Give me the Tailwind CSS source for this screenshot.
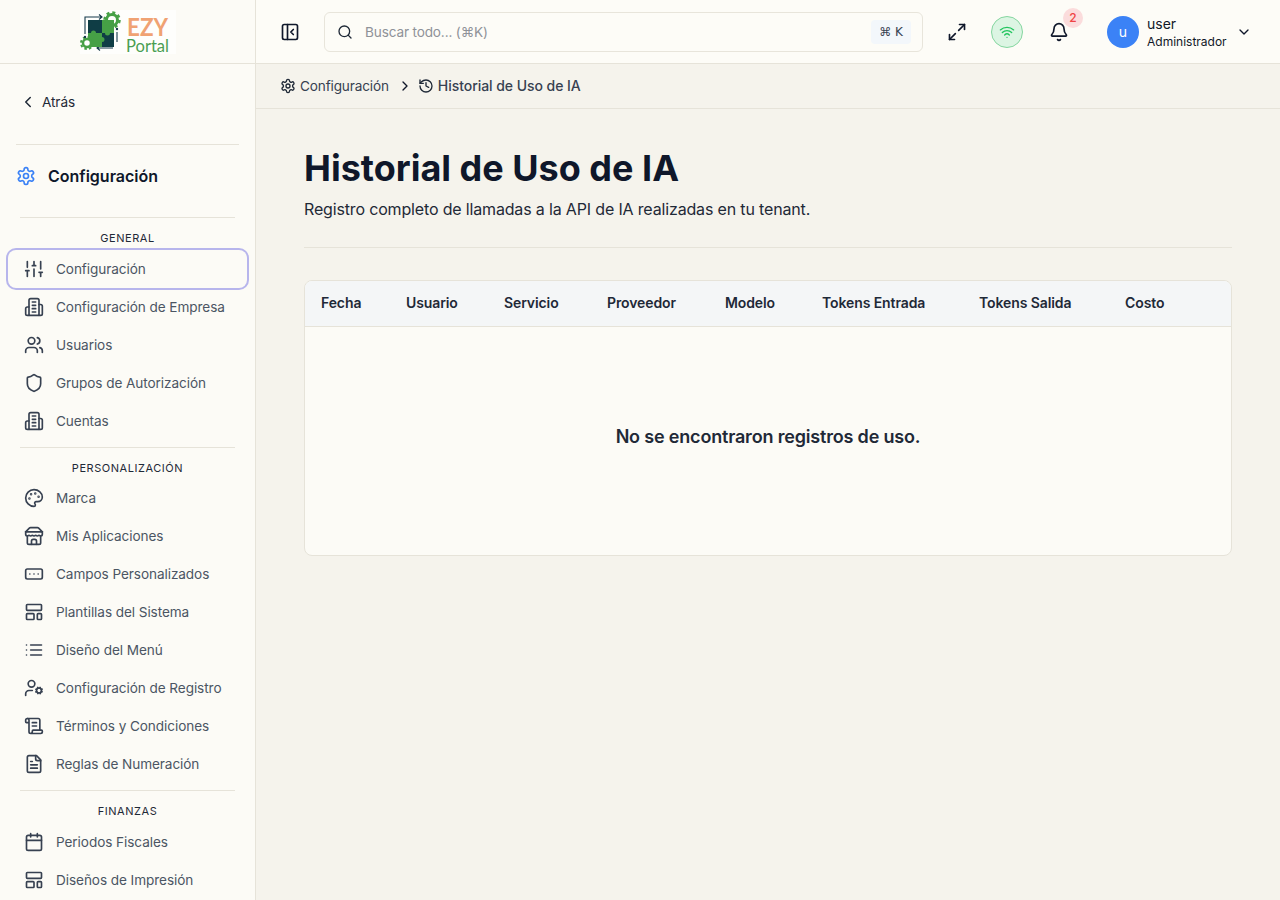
<!DOCTYPE html>
<html>
<head>
  <meta charset="UTF-8">
  <title>Historial de Uso de IA</title>
  <script src="https://cdn.jsdelivr.net/npm/@tailwindcss/browser@4"></script>
</head>
<body class="h-[900px] overflow-hidden bg-[#f5f3ec] font-['Inter',sans-serif] text-[#0f172a]">
  <!-- Icon sprite -->
  <svg class="hidden">
    <symbol id="i-sliders" viewBox="0 0 24 24"><path d="M4 21v-7M4 10V3M12 21v-9M12 8V3M20 21v-5M20 12V3M2 14h4M10 8h4M18 16h4"/></symbol>
    <symbol id="i-building" viewBox="0 0 24 24"><path d="M6 22V4a2 2 0 0 1 2-2h8a2 2 0 0 1 2 2v18Z"/><path d="M6 12H4a2 2 0 0 0-2 2v6a2 2 0 0 0 2 2h2"/><path d="M18 9h2a2 2 0 0 1 2 2v9a2 2 0 0 1-2 2h-2"/><path d="M10 6h4M10 10h4M10 14h4M10 18h4"/></symbol>
    <symbol id="i-users" viewBox="0 0 24 24"><path d="M16 21v-2a4 4 0 0 0-4-4H6a4 4 0 0 0-4 4v2"/><circle cx="9" cy="7" r="4"/><path d="M22 21v-2a4 4 0 0 0-3-3.87"/><path d="M16 3.13a4 4 0 0 1 0 7.75"/></symbol>
    <symbol id="i-shield" viewBox="0 0 24 24"><path d="M20 13c0 5-3.5 7.5-7.66 8.95a1 1 0 0 1-.67-.01C7.5 20.5 4 18 4 13V6a1 1 0 0 1 1-1c2 0 4.5-1.2 6.24-2.72a1.17 1.17 0 0 1 1.52 0C14.51 3.81 17 5 19 5a1 1 0 0 1 1 1z"/></symbol>
    <symbol id="i-palette" viewBox="0 0 24 24"><circle cx="13.5" cy="6.5" r=".5" fill="currentColor"/><circle cx="17.5" cy="10.5" r=".5" fill="currentColor"/><circle cx="8.5" cy="7.5" r=".5" fill="currentColor"/><circle cx="6.5" cy="12.5" r=".5" fill="currentColor"/><path d="M12 2C6.5 2 2 6.5 2 12s4.5 10 10 10c.926 0 1.648-.746 1.648-1.688 0-.437-.18-.835-.437-1.125-.29-.289-.438-.652-.438-1.125a1.64 1.64 0 0 1 1.668-1.668h1.996c3.051 0 5.555-2.503 5.555-5.554C21.965 6.012 17.461 2 12 2z"/></symbol>
    <symbol id="i-store" viewBox="0 0 24 24"><path d="m2 7 4.41-4.41A2 2 0 0 1 7.83 2h8.34a2 2 0 0 1 1.42.59L22 7"/><path d="M4 12v8a2 2 0 0 0 2 2h12a2 2 0 0 0 2-2v-8"/><path d="M15 22v-4a2 2 0 0 0-2-2h-2a2 2 0 0 0-2 2v4"/><path d="M2 7h20"/><path d="M22 7v3a2 2 0 0 1-2 2a2.7 2.7 0 0 1-1.59-.63.7.7 0 0 0-.82 0A2.7 2.7 0 0 1 16 12a2.7 2.7 0 0 1-1.59-.63.7.7 0 0 0-.82 0A2.7 2.7 0 0 1 12 12a2.7 2.7 0 0 1-1.59-.63.7.7 0 0 0-.82 0A2.7 2.7 0 0 1 8 12a2.7 2.7 0 0 1-1.59-.63.7.7 0 0 0-.82 0A2.7 2.7 0 0 1 4 12a2 2 0 0 1-2-2V7"/></symbol>
    <symbol id="i-fields" viewBox="0 0 24 24"><rect width="20" height="12" x="2" y="6" rx="2"/><path d="M12 12h.01M17 12h.01M7 12h.01"/></symbol>
    <symbol id="i-layout" viewBox="0 0 24 24"><rect width="18" height="7" x="3" y="3" rx="1"/><rect width="9" height="7" x="3" y="14" rx="1"/><rect width="5" height="7" x="16" y="14" rx="1"/></symbol>
    <symbol id="i-list" viewBox="0 0 24 24"><path d="M3 12h.01M3 18h.01M3 6h.01M8 12h13M8 18h13M8 6h13"/></symbol>
    <symbol id="i-usercog" viewBox="0 0 24 24"><circle cx="18" cy="15" r="3"/><circle cx="9" cy="7" r="4"/><path d="M10 15H6a4 4 0 0 0-4 4v2"/><path d="m21.7 16.4-.9-.3M15.2 13.9l-.9-.3M16.6 18.7l.3-.9M19.1 12.2l.3-.9M19.6 18.7l-.4-1M16.8 12.3l-.4-1M14.3 16.6l1-.4M20.7 13.8l1-.4"/></symbol>
    <symbol id="i-scroll" viewBox="0 0 24 24"><path d="M15 12h-5M15 8h-5"/><path d="M19 17V5a2 2 0 0 0-2-2H4"/><path d="M8 21h12a2 2 0 0 0 2-2v-1a1 1 0 0 0-1-1H11a1 1 0 0 0-1 1v1a2 2 0 1 1-4 0V5a2 2 0 1 0-4 0v2a1 1 0 0 0 1 1h3"/></symbol>
    <symbol id="i-file" viewBox="0 0 24 24"><path d="M15 2H6a2 2 0 0 0-2 2v16a2 2 0 0 0 2 2h12a2 2 0 0 0 2-2V7Z"/><path d="M14 2v4a2 2 0 0 0 2 2h4"/><path d="M10 9H8M16 13H8M16 17H8"/></symbol>
    <symbol id="i-calendar" viewBox="0 0 24 24"><path d="M8 2v4M16 2v4"/><rect width="18" height="18" x="3" y="4" rx="2"/><path d="M3 10h18"/></symbol>
    <symbol id="i-gear" viewBox="0 0 24 24"><path d="M12.22 2h-.44a2 2 0 0 0-2 2v.18a2 2 0 0 1-1 1.73l-.43.25a2 2 0 0 1-2 0l-.15-.08a2 2 0 0 0-2.73.73l-.22.38a2 2 0 0 0 .73 2.73l.15.1a2 2 0 0 1 1 1.72v.51a2 2 0 0 1-1 1.74l-.15.09a2 2 0 0 0-.73 2.73l.22.38a2 2 0 0 0 2.73.73l.15-.08a2 2 0 0 1 2 0l.43.25a2 2 0 0 1 1 1.73V20a2 2 0 0 0 2 2h.44a2 2 0 0 0 2-2v-.18a2 2 0 0 1 1-1.73l.43-.25a2 2 0 0 1 2 0l.15.08a2 2 0 0 0 2.73-.73l.22-.39a2 2 0 0 0-.73-2.73l-.15-.08a2 2 0 0 1-1-1.74v-.5a2 2 0 0 1 1-1.74l.15-.09a2 2 0 0 0 .73-2.73l-.22-.38a2 2 0 0 0-2.73-.73l-.15.08a2 2 0 0 1-2 0l-.43-.25a2 2 0 0 1-1-1.73V4a2 2 0 0 0-2-2z"/><circle cx="12" cy="12" r="3"/></symbol>
  </svg>

  <div class="flex h-[900px]">
    <!-- Sidebar -->
    <aside class="w-[256px] h-[900px] shrink-0 overflow-hidden border-r border-[#e6e3d9] bg-[#fcfbf6]">
      <div class="h-[64px] flex items-center justify-center border-b border-[#e6e3d9]">
        <svg width="96" height="44" viewBox="0 0 96 44" class="bg-white/70">
          <path d="M5 24V7h17M19 4.500 22 7l-3 2.500M37 22v10M17 38h16M20 35.500 17 38l3 2.500" fill="none" stroke="#15394a" stroke-width="1.1"/>
          <rect x="8" y="10" width="14" height="13" fill="#0f3d45"/>
          <rect x="22" y="23" width="12" height="14" fill="#0f3d45"/>
          <path d="M22 10h12v13h-4a2.500 2.500 0 0 1-5 0h-3z" fill="#46a046"/>
          <path d="M8 23h3a2.500 2.500 0 0 1 5 0h6v4a2.500 2.500 0 0 1 0 5v5H8z" fill="#46a046"/>
          <circle cx="32" cy="10" r="7.500" fill="none" stroke="#46a046" stroke-width="2.500" stroke-dasharray="3 2.900"/>
          <circle cx="32" cy="10" r="5.500" fill="none" stroke="#46a046" stroke-width="3"/>
          <circle cx="7" cy="33" r="6" fill="none" stroke="#46a046" stroke-width="2" stroke-dasharray="2.500 2.200"/>
          <circle cx="7" cy="33" r="4" fill="#fff" stroke="#46a046" stroke-width="2.500"/>
          <circle cx="37" cy="19" r="1.200" fill="#15394a"/>
          <circle cx="5" cy="27" r="1.200" fill="#15394a"/>
          <text x="47" y="26" font-family="Lato, sans-serif" font-size="24" font-weight="700" fill="#f0a273" textLength="41" lengthAdjust="spacingAndGlyphs">EZY</text>
          <text x="46" y="42" font-family="Lato, sans-serif" font-size="17" fill="#4a9e52" textLength="43" lengthAdjust="spacingAndGlyphs">Portal</text>
        </svg>
      </div>

      <div class="h-[80px] flex items-center pl-[19px] pb-[4px] gap-[5px] text-[#1f2937]">
        <svg class="w-[18px] h-[18px]" viewBox="0 0 24 24" fill="none" stroke="currentColor" stroke-width="2" stroke-linecap="round" stroke-linejoin="round"><path d="m15 18-6-6 6-6"/></svg>
        <span class="text-[13.6px] leading-[20px] tracking-[-0.1px]">Atrás</span>
      </div>

      <div class="mx-[16px] border-t border-[#e6e3d9]"></div>
      <div class="h-[72px] flex items-center pl-[16px] pb-[10px] gap-[12px]">
        <svg class="w-[20px] h-[20px] text-[#3b82f6]" fill="none" stroke="currentColor" stroke-width="2" stroke-linecap="round" stroke-linejoin="round"><use href="#i-gear"/></svg>
        <span class="text-[16px] font-semibold">Configuración</span>
      </div>

      <div class="mx-[20px] border-t border-[#e6e3d9]"></div>
      <div class="h-[32px] pt-[13px] text-center text-[11px] leading-[14px] tracking-[0.05em] text-[#1f2937]">GENERAL</div>
      <nav class="text-[13.6px] leading-[20px] tracking-[-0.08px] text-[#4b5563]">
        <a class="mx-[8px] flex h-[38px] items-center gap-[12px] rounded-lg pl-[16px] ring-2 ring-[#b7b5ec]">
          <svg class="w-[20px] h-[20px] text-[#374151]" fill="none" stroke="currentColor" stroke-width="2" stroke-linecap="round" stroke-linejoin="round"><use href="#i-sliders"/></svg>Configuración</a>
        <a class="mx-[8px] flex h-[38px] items-center gap-[12px] pl-[16px]">
          <svg class="w-[20px] h-[20px] text-[#374151]" fill="none" stroke="currentColor" stroke-width="2" stroke-linecap="round" stroke-linejoin="round"><use href="#i-building"/></svg>Configuración de Empresa</a>
        <a class="mx-[8px] flex h-[38px] items-center gap-[12px] pl-[16px]">
          <svg class="w-[20px] h-[20px] text-[#374151]" fill="none" stroke="currentColor" stroke-width="2" stroke-linecap="round" stroke-linejoin="round"><use href="#i-users"/></svg>Usuarios</a>
        <a class="mx-[8px] flex h-[38px] items-center gap-[12px] pl-[16px]">
          <svg class="w-[20px] h-[20px] text-[#374151]" fill="none" stroke="currentColor" stroke-width="2" stroke-linecap="round" stroke-linejoin="round"><use href="#i-shield"/></svg>Grupos de Autorización</a>
        <a class="mx-[8px] flex h-[38px] items-center gap-[12px] pl-[16px]">
          <svg class="w-[20px] h-[20px] text-[#374151]" fill="none" stroke="currentColor" stroke-width="2" stroke-linecap="round" stroke-linejoin="round"><use href="#i-building"/></svg>Cuentas</a>
      </nav>

      <div class="mx-[20px] mt-[7px] border-t border-[#e6e3d9]"></div>
      <div class="h-[31px] pt-[13px] text-center text-[11px] leading-[14px] tracking-[0.05em] text-[#1f2937]">PERSONALIZACIÓN</div>
      <nav class="text-[13.6px] leading-[20px] tracking-[-0.08px] text-[#4b5563]">
        <a class="mx-[8px] flex h-[38px] items-center gap-[12px] pl-[16px]">
          <svg class="w-[20px] h-[20px] text-[#374151]" fill="none" stroke="currentColor" stroke-width="2" stroke-linecap="round" stroke-linejoin="round"><use href="#i-palette"/></svg>Marca</a>
        <a class="mx-[8px] flex h-[38px] items-center gap-[12px] pl-[16px]">
          <svg class="w-[20px] h-[20px] text-[#374151]" fill="none" stroke="currentColor" stroke-width="2" stroke-linecap="round" stroke-linejoin="round"><use href="#i-store"/></svg>Mis Aplicaciones</a>
        <a class="mx-[8px] flex h-[38px] items-center gap-[12px] pl-[16px]">
          <svg class="w-[20px] h-[20px] text-[#374151]" fill="none" stroke="currentColor" stroke-width="2" stroke-linecap="round" stroke-linejoin="round"><use href="#i-fields"/></svg>Campos Personalizados</a>
        <a class="mx-[8px] flex h-[38px] items-center gap-[12px] pl-[16px]">
          <svg class="w-[20px] h-[20px] text-[#374151]" fill="none" stroke="currentColor" stroke-width="2" stroke-linecap="round" stroke-linejoin="round"><use href="#i-layout"/></svg>Plantillas del Sistema</a>
        <a class="mx-[8px] flex h-[38px] items-center gap-[12px] pl-[16px]">
          <svg class="w-[20px] h-[20px] text-[#374151]" fill="none" stroke="currentColor" stroke-width="2" stroke-linecap="round" stroke-linejoin="round"><use href="#i-list"/></svg>Diseño del Menú</a>
        <a class="mx-[8px] flex h-[38px] items-center gap-[12px] pl-[16px]">
          <svg class="w-[20px] h-[20px] text-[#374151]" fill="none" stroke="currentColor" stroke-width="2" stroke-linecap="round" stroke-linejoin="round"><use href="#i-usercog"/></svg>Configuración de Registro</a>
        <a class="mx-[8px] flex h-[38px] items-center gap-[12px] pl-[16px]">
          <svg class="w-[20px] h-[20px] text-[#374151]" fill="none" stroke="currentColor" stroke-width="2" stroke-linecap="round" stroke-linejoin="round"><use href="#i-scroll"/></svg>Términos y Condiciones</a>
        <a class="mx-[8px] flex h-[38px] items-center gap-[12px] pl-[16px]">
          <svg class="w-[20px] h-[20px] text-[#374151]" fill="none" stroke="currentColor" stroke-width="2" stroke-linecap="round" stroke-linejoin="round"><use href="#i-file"/></svg>Reglas de Numeración</a>
      </nav>

      <div class="mx-[20px] mt-[7px] border-t border-[#e6e3d9]"></div>
      <div class="h-[32px] pt-[13px] text-center text-[11px] leading-[14px] tracking-[0.05em] text-[#1f2937]">FINANZAS</div>
      <nav class="text-[13.6px] leading-[20px] tracking-[-0.08px] text-[#4b5563]">
        <a class="mx-[8px] flex h-[38px] items-center gap-[12px] pl-[16px]">
          <svg class="w-[20px] h-[20px] text-[#374151]" fill="none" stroke="currentColor" stroke-width="2" stroke-linecap="round" stroke-linejoin="round"><use href="#i-calendar"/></svg>Periodos Fiscales</a>
        <a class="mx-[8px] flex h-[38px] items-center gap-[12px] pl-[16px]">
          <svg class="w-[20px] h-[20px] text-[#374151]" fill="none" stroke="currentColor" stroke-width="2" stroke-linecap="round" stroke-linejoin="round"><use href="#i-layout"/></svg>Diseños de Impresión</a>
      </nav>
    </aside>

    <div class="flex-1 min-w-0">
      <!-- Top bar -->
      <header class="h-[64px] flex items-center border-b border-[#e6e3d9] bg-[#fdfcf7] pl-[24px]">
        <svg class="w-[20px] h-[20px] shrink-0" viewBox="0 0 24 24" fill="none" stroke="currentColor" stroke-width="2" stroke-linecap="round" stroke-linejoin="round"><rect width="18" height="18" x="3" y="3" rx="2"/><path d="M9 3v18"/><path d="m16 15-3-3 3-3"/></svg>
        <div class="ml-[24px] w-[599px] h-[40px] flex items-center rounded-md border border-[#e8e5db] pl-[12px] pr-[11px]">
          <svg class="w-[16px] h-[16px] text-[#1f2937]" viewBox="0 0 24 24" fill="none" stroke="currentColor" stroke-width="2" stroke-linecap="round" stroke-linejoin="round"><circle cx="11" cy="11" r="8"/><path d="m21 21-4.3-4.3"/></svg>
          <span class="ml-[12px] text-[13.6px] leading-[20px] tracking-[-0.15px] text-[#8f9298]">Buscar todo... (⌘K)</span>
          <span class="ml-auto h-[24px] w-[40px] flex items-center justify-center rounded bg-[#f3f7fb] text-[12px] text-[#374151] font-['DejaVu_Sans',sans-serif]">⌘ K</span>
        </div>
        <svg class="ml-[24px] w-[20px] h-[20px]" viewBox="0 0 24 24" fill="none" stroke="currentColor" stroke-width="2" stroke-linecap="round" stroke-linejoin="round"><path d="M15 3h6v6"/><path d="m21 3-7 7"/><path d="m3 21 7-7"/><path d="M9 21H3v-6"/></svg>
        <div class="ml-[24px] w-[32px] h-[32px] flex items-center justify-center rounded-full border border-[#86d6a0] bg-[#dcf5e3]">
          <svg class="w-[16px] h-[16px] text-[#22c55e]" viewBox="0 0 24 24" fill="none" stroke="currentColor" stroke-width="2" stroke-linecap="round" stroke-linejoin="round"><path d="M12 20h.01"/><path d="M2 8.82a15 15 0 0 1 20 0"/><path d="M5 12.859a10 10 0 0 1 14 0"/><path d="M8.5 16.429a5 5 0 0 1 7 0"/></svg>
        </div>
        <div class="relative ml-[26px] w-[20px] h-[20px]">
          <svg class="w-[20px] h-[20px]" viewBox="0 0 24 24" fill="none" stroke="currentColor" stroke-width="2" stroke-linecap="round" stroke-linejoin="round"><path d="M10.268 21a2 2 0 0 0 3.464 0"/><path d="M3.262 15.326A1 1 0 0 0 4 17h16a1 1 0 0 0 .74-1.673C19.41 13.956 18 12.499 18 8A6 6 0 0 0 6 8c0 4.499-1.411 5.956-2.738 7.326"/></svg>
          <span class="absolute left-[14px] top-[-14px] w-[20px] h-[20px] flex items-center justify-center rounded-full bg-[#fbdcdc] text-[12px] font-medium text-[#ef4444]">2</span>
        </div>
        <div class="ml-[38px] w-[32px] h-[32px] flex items-center justify-center rounded-full bg-[#3b82f6] text-[14px] text-white">u</div>
        <div class="ml-[8px] mt-[2px] flex flex-col">
          <span class="text-[14px] leading-[18px] text-[#111827]">user</span>
          <span class="text-[12px] leading-[17px] text-[#111827]">Administrador</span>
        </div>
        <svg class="ml-[9px] w-[16px] h-[16px]" viewBox="0 0 24 24" fill="none" stroke="currentColor" stroke-width="2" stroke-linecap="round" stroke-linejoin="round"><path d="m6 9 6 6 6-6"/></svg>
      </header>

      <!-- Breadcrumb -->
      <div class="h-[45px] flex items-center border-b border-[#e6e3d9] pl-[24px] text-[13.6px] leading-[20px] tracking-[-0.15px]">
        <svg class="w-[16px] h-[16px] text-[#1f2937]" fill="none" stroke="currentColor" stroke-width="2" stroke-linecap="round" stroke-linejoin="round"><use href="#i-gear"/></svg>
        <span class="ml-[4px] text-[#374151]">Configuración</span>
        <svg class="ml-[8px] w-[16px] h-[16px]" viewBox="0 0 24 24" fill="none" stroke="currentColor" stroke-width="2" stroke-linecap="round" stroke-linejoin="round"><path d="m9 18 6-6-6-6"/></svg>
        <svg class="ml-[5px] w-[16px] h-[16px] text-[#1f2937]" viewBox="0 0 24 24" fill="none" stroke="currentColor" stroke-width="2" stroke-linecap="round" stroke-linejoin="round"><path d="M3 12a9 9 0 1 0 9-9 9.75 9.75 0 0 0-6.74 2.74L3 8"/><path d="M3 3v5h5"/><path d="M12 7v5l4 2"/></svg>
        <span class="ml-[4px] text-[14px] tracking-[-0.05px] font-medium text-[#374151]">Historial de Uso de IA</span>
      </div>

      <!-- Page -->
      <main class="px-[48px] pt-[37px]">
        <h1 class="text-[36px] leading-[44px] font-bold text-[#0f172a]">Historial de Uso de IA</h1>
        <p class="mt-[7px] text-[16px] leading-[24px] tracking-[-0.16px] text-[#1f2937]">Registro completo de llamadas a la API de IA realizadas en tu tenant.</p>
        <div class="mt-[26px] border-t border-[#e6e3d9]"></div>

        <div class="mt-[32px] h-[276px] overflow-hidden rounded-lg border border-[#e6e3d9] bg-[#fcfbf6]">
          <div class="h-[46px] flex items-center border-b border-[#e6e3d9] bg-[#f4f6f7] pl-[16px] pb-[2px] text-[14px] tracking-[-0.1px] font-semibold text-[#1f2937]">
            <span class="w-[85px]">Fecha</span>
            <span class="w-[98px]">Usuario</span>
            <span class="w-[103px]">Servicio</span>
            <span class="w-[118px]">Proveedor</span>
            <span class="w-[97px]">Modelo</span>
            <span class="w-[157px]">Tokens Entrada</span>
            <span class="w-[146px]">Tokens Salida</span>
            <span>Costo</span>
          </div>
          <div class="h-[228px] flex items-center justify-center pb-[10px] text-[18px] tracking-[-0.18px] font-semibold text-[#1f2937]">No se encontraron registros de uso.</div>
        </div>
      </main>
    </div>
  </div>
</body>
</html>
